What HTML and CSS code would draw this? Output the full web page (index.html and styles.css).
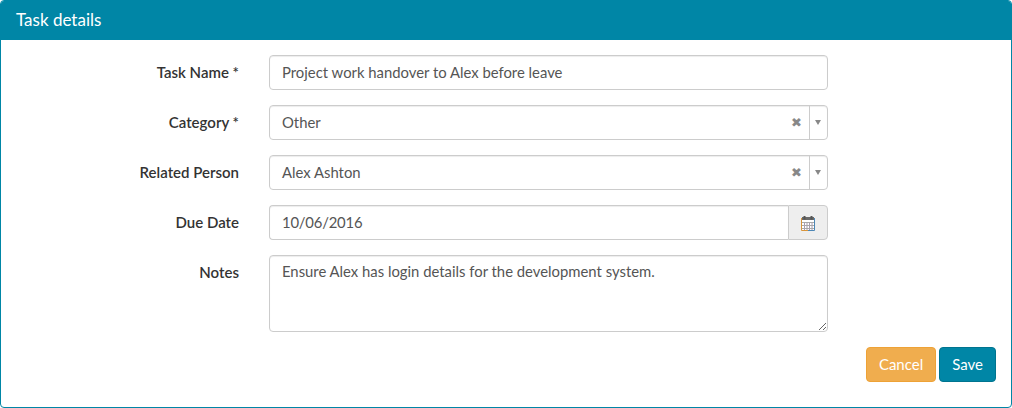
FILE: index.html
```html
<!DOCTYPE html>
<html lang="en">
<head>
    <meta charset="UTF-8">
    <title>Task details</title>
    <link rel="stylesheet" href="styles.css">
</head>
<body>
    <div class="panel">
        <div class="panel-heading">Task details</div>
        <form class="panel-body">
            <div class="form-row">
                <label class="form-label">Task Name *</label>
                <input class="form-control" type="text" value="Project work handover to Alex before leave">
            </div>
            <div class="form-row">
                <label class="form-label">Category *</label>
                <div class="form-control select-box">
                    <span class="select-value">Other</span>
                    <span class="select-clear">&#10006;</span>
                    <span class="select-arrow"><span class="caret"></span></span>
                </div>
            </div>
            <div class="form-row">
                <label class="form-label">Related Person</label>
                <div class="form-control select-box">
                    <span class="select-value">Alex Ashton</span>
                    <span class="select-clear">&#10006;</span>
                    <span class="select-arrow"><span class="caret"></span></span>
                </div>
            </div>
            <div class="form-row">
                <label class="form-label">Due Date</label>
                <div class="input-group">
                    <input class="form-control date-input" type="text" value="10/06/2016">
                    <span class="input-addon">
                        <svg width="14" height="16" viewBox="0 0 14 16">
                            <rect x="0.5" y="3.5" width="13" height="12" fill="#fff"/>
                            <path d="M1 3.5h12" stroke="#6a6a6a" stroke-width="3" fill="none"/>
                            <path d="M3.5 7v8M6 7v8M8.5 7v8M11 7v8" stroke="#a89ab0" fill="none"/>
                            <path d="M1 7.5h12M1 10.5h12M1 13.5h12" stroke="#a8a8a8" fill="none"/>
                            <path d="M0.5 3v12.5H7" stroke="#d9953b" fill="none"/>
                            <path d="M13.5 3v12.5H7" stroke="#4c86b5" fill="none"/>
                            <path d="M3.5 4.5V1M10.5 4.5V1" stroke="#555" stroke-width="2" fill="none"/>
                        </svg>
                    </span>
                </div>
            </div>
            <div class="form-row">
                <label class="form-label">Notes</label>
                <textarea class="form-control notes">Ensure Alex has login details for the development system.</textarea>
            </div>
            <div class="form-actions">
                <button type="button" class="btn btn-cancel">Cancel</button>
                <button type="button" class="btn btn-save">Save</button>
            </div>
        </form>
    </div>
</body>
</html>
```

FILE: styles.css
```css
* {
    box-sizing: border-box;
}

body {
    margin: 0;
    font-family: 'Lato', sans-serif;
    font-size: 15px;
    color: #333;
    background-color: #fff;
}

/* Panel */
.panel {
    height: 408px;
    border: 1px solid #0086a6;
    border-radius: 4px;
    overflow: hidden;
}

.panel-heading {
    height: 39px;
    margin: -1px -1px 0;
    padding: 0 16px;
    line-height: 39px;
    font-size: 17px;
    color: #fff;
    background-color: #0086a6;
}

.panel-body {
    padding: 15px 14px 0 15px;
    border-top: 1px solid #0086a6;
}

/* Form rows */
.form-row {
    display: flex;
    gap: 30px;
    width: 812px;
    margin-bottom: 15px;
}

.form-label {
    flex: 0 0 223px;
    padding-top: 7px;
    text-align: right;
    font-weight: 600;
    font-size: 15px;
    line-height: 20px;
    color: #333;
}

.form-control {
    display: block;
    width: 559px;
    height: 35px;
    padding: 5px 12px 7px;
    font-family: inherit;
    font-size: 14.85px;
    line-height: 21px;
    color: #555;
    background-color: #fff;
    border: 1px solid #ccc;
    border-radius: 4px;
    box-shadow: inset 0 1px 1px rgba(0, 0, 0, 0.075);
    outline: none;
}

/* Select look */
.select-box {
    display: flex;
    align-items: center;
    padding: 6px 0 6px 12px;
}

.select-value {
    flex: 1;
}

.select-clear {
    width: 12px;
    margin-right: 7px;
    font-size: 13px;
    text-align: center;
    color: #888;
}

.select-arrow {
    display: flex;
    align-items: center;
    justify-content: center;
    width: 18px;
    height: 33px;
    padding-right: 2px;
    border-left: 1px solid #ccc;
}

.caret {
    border-top: 5px solid #888;
    border-left: 3px solid transparent;
    border-right: 3px solid transparent;
}

/* Date input */
.input-group {
    display: flex;
    width: 559px;
}

.input-group .form-control {
    flex: 1;
    width: auto;
    min-width: 0;
    border-right: 0;
    border-radius: 4px 0 0 4px;
}

.date-input {
    letter-spacing: -0.2px;
}

.input-addon {
    display: flex;
    align-items: center;
    justify-content: center;
    width: 40px;
    height: 35px;
    background-color: #eee;
    border: 1px solid #ccc;
    border-radius: 0 4px 4px 0;
}

.notes {
    height: 77px;
    resize: vertical;
}

/* Buttons */
.form-actions {
    display: flex;
    justify-content: flex-end;
    gap: 3px;
    padding-right: 1px;
}

.btn {
    height: 35px;
    padding: 0 12px 2px;
    font-family: inherit;
    font-size: 15px;
    color: #fff;
    border: 1px solid transparent;
    border-radius: 4px;
}

.btn-cancel {
    background-color: #f0ad4e;
    border-color: #eea236;
}

.btn-save {
    background-color: #0086a6;
    border-color: #00748f;
}
```
